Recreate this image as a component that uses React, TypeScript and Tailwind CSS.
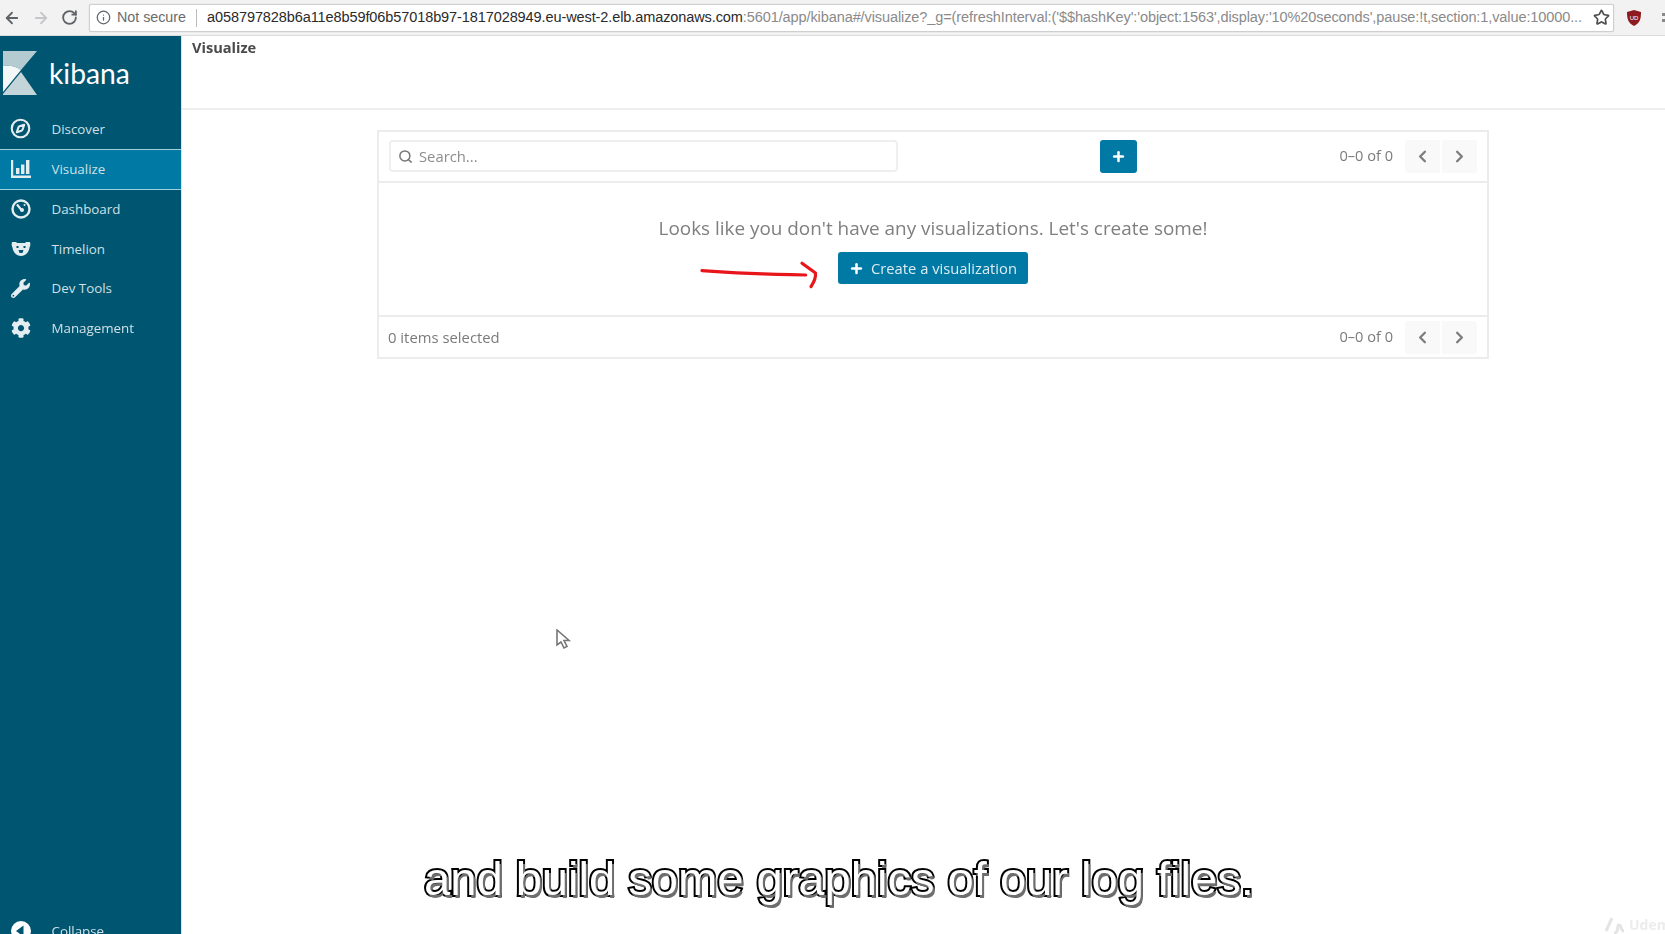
import { ArrowLeft, ArrowRight, RotateCw, Info, Star, Search, Plus, ChevronLeft, ChevronRight, Compass } from "lucide-react";
import { FaWrench, FaCog } from "react-icons/fa";

const Bear = () => (
  <svg width="20" height="15" viewBox="0 0 20 15" fill="currentColor">
    <path d="M1 1h4l1 1h8l1-1h4c.5 2 .5 4-.5 5.500C18 11 14.500 15 10 15S2 11 1.500 6.500C.5 5 .5 3 1 1z" />
    <path d="M5.500 5h2v2h-2zM12.500 5h2v2h-2zM7.500 9h5l-1 3h-3z" fill="#005571" />
  </svg>
);

const BarsIcon = () => (
  <svg width="20" height="18" viewBox="0 0 20 18" fill="currentColor">
    <path d="M0 0h2.200v15.500H20V18H0z" />
    <rect x="5" y="8" width="3.400" height="6" />
    <rect x="10" y="4.500" width="3.400" height="9.500" />
    <rect x="15" y="0" width="3.400" height="14" />
  </svg>
);

const Gauge = () => (
  <svg width="20" height="20" viewBox="0 0 20 20" fill="none" stroke="currentColor">
    <circle cx="10" cy="10" r="8.500" strokeWidth="2.400" />
    <path d="M6 5.500l4.500 5.500" strokeWidth="2.200" />
    <circle cx="11" cy="11" r="2" fill="currentColor" stroke="none" />
    <circle cx="13.500" cy="6" r="1" fill="currentColor" stroke="none" />
  </svg>
);

const CollapseIcon = () => (
  <svg width="20" height="20" viewBox="0 0 20 20">
    <circle cx="10" cy="10" r="10" fill="#ffffff" />
    <path d="M12.500 4.500v11L5 10z" fill="#005571" />
  </svg>
);

const Pager = () => (
  <div className="flex items-center">
    <span className="text-[14.600px] text-[#7b7b7b] mr-[12px]">0–0 of 0</span>
    <div className="flex gap-[2px]">
      <div className="w-[35px] h-[33px] bg-[#f9f9f9] flex items-center justify-center rounded-l-[3px]">
        <ChevronLeft size={19} strokeWidth={3} className="text-[#7d7d7d]" />
      </div>
      <div className="w-[35px] h-[33px] bg-[#f9f9f9] flex items-center justify-center rounded-r-[3px]">
        <ChevronRight size={19} strokeWidth={3} className="text-[#7d7d7d]" />
      </div>
    </div>
  </div>
);

const items = [
  { label: "Discover", icon: <Compass size={21} strokeWidth={2.4} /> },
  { label: "Visualize", icon: <BarsIcon />, active: true },
  { label: "Dashboard", icon: <Gauge /> },
  { label: "Timelion", icon: <Bear /> },
  { label: "Dev Tools", icon: <FaWrench size={19} /> },
  { label: "Management", icon: <FaCog size={20} /> },
];

export default function App() {
  return (
    <div className="relative w-[1665px] h-[934px] overflow-hidden bg-white font-['Open_Sans',sans-serif]">
      <div className="flex flex-col h-full blur-[0.5px]">
        <header className="h-[36px] shrink-0 bg-[#f2f2f2] flex items-center border-b border-[#dcdcdc] font-['Liberation_Sans',sans-serif]">
          <ArrowLeft size={18} strokeWidth={2.4} className="ml-[3px] text-[#5f6368]" />
          <ArrowRight size={18} strokeWidth={2.4} className="ml-[11px] text-[#c4c6c9]" />
          <RotateCw size={17} strokeWidth={2.6} className="ml-[11px] text-[#5f6368]" />
          <div className="ml-[11px] w-[1528px] h-[28px] bg-white border border-[#cfcfcf] rounded-[2px] flex items-center shadow-[0_0_1px_#bbb]">
            <Info size={15} className="ml-[6px] text-[#5f6368] shrink-0" />
            <span className="ml-[6px] text-[14.300px] text-[#6b6b6b] shrink-0">Not secure</span>
            <span className="ml-[10px] w-px h-[18px] bg-[#bdbdbd] shrink-0" />
            <span className="ml-[10px] text-[14.530px] whitespace-nowrap overflow-hidden flex-1 tracking-[-0.1px]">
              <span className="text-[#2a2a2a]">a058797828b6a11e8b59f06b57018b97-1817028949.eu-west-2.elb.amazonaws.com</span>
              <span className="text-[#8a8a8a]">:5601/app/kibana#/visualize?_g=(refreshInterval:('$$hashKey':'object:1563',display:'10%20seconds',pause:!t,section:1,value:10000...</span>
            </span>
            <Star size={17} strokeWidth={2.4} className="mx-[3px] text-[#4d4d4d] shrink-0" />
          </div>
          <svg width="18" height="18" viewBox="0 0 18 18" className="ml-[11px] shrink-0">
            <path d="M9 1l7 2c0 7-1 11-7 14C3 14 2 10 2 3z" fill="#8e1b1f" />
            <text x="9" y="11" fontSize="6" textAnchor="middle" fill="#fff" fontFamily="Liberation Sans">UD</text>
          </svg>
          <div className="ml-[19px] flex flex-col gap-[3px]">
            <span className="w-[3px] h-[3px] bg-[#888]" />
            <span className="w-[3px] h-[3px] bg-[#888]" />
          </div>
        </header>

        <div className="flex flex-1 min-h-0">
          <aside className="w-[182px] shrink-0 bg-[#005571] border-r border-[#cfe8f0] flex flex-col text-[13.350px] text-[#cfe0e6]">
            <div className="h-[73px] shrink-0 flex items-center pt-[2px]">
              <svg width="34" height="44" viewBox="0 0 34 44" className="ml-[3px] -mt-[2px] shrink-0">
                <path d="M0 0h34L18 19C13 15 7 14 0 15z" fill="#b4cbd1" />
                <path d="M0 15c7-1 13 0 18 4L0 41z" fill="#f4f8f9" />
                <path d="M18 21l16 23H0v-1z" fill="#c3d5d9" />
              </svg>
              <span className="ml-[12px] text-[28.300px] leading-none text-white font-['Lato',sans-serif]">kibana</span>
            </div>
            <nav className="flex flex-col">
              {items.map((it) => (
                <div
                  key={it.label}
                  className={
                    it.active
                      ? "h-[41px] flex items-center bg-[#0079a5] border-y border-[#9fd0e0]"
                      : "h-[39.500px] flex items-center"
                  }
                >
                  <span className="w-[41px] flex justify-center text-[#e4eef1]">{it.icon}</span>
                  <span className="ml-[10.500px]">{it.label}</span>
                </div>
              ))}
            </nav>
            <div className="mt-auto -mb-[17px] h-[40px] flex items-center">
              <span className="w-[41px] flex justify-center"><CollapseIcon /></span>
              <span className="ml-[10.500px]">Collapse</span>
            </div>
          </aside>

          <main className="flex-1 min-w-0 flex flex-col">
            <div className="h-[74px] shrink-0 border-b-2 border-[#efefef] pl-[10px] pt-[1px] text-[14.600px] font-bold text-[#4a4a4a]">Visualize</div>
            <section className="ml-[195px] mt-[20px] w-[1112px] h-[229px] border-2 border-[#ececec] flex flex-col">
              <div className="h-[51px] shrink-0 border-b-2 border-[#ececec] flex items-center pl-[10px] pr-[10px]">
                <div className="w-[509px] h-[32px] -mt-[1px] border-2 border-[#efefef] rounded-[4px] flex items-center text-[14.800px] text-[#8d8d8d]">
                  <Search size={15} strokeWidth={2.4} className="ml-[7px] mr-[6px] text-[#777]" />
                  Search...
                </div>
                <div className="ml-[202px] w-[37px] h-[33px] -mt-[1px] bg-[#0079a5] rounded-[3px] flex items-center justify-center">
                  <Plus size={15} strokeWidth={4} className="text-white" />
                </div>
                <div className="ml-auto -mt-[1px]"><Pager /></div>
              </div>
              <div className="flex-1 flex flex-col items-center justify-start">
                <p className="mt-[33px] text-[18.900px] leading-[24px] text-[#7f7f7f]">Looks like you don't have any visualizations. Let's create some!</p>
                <div className="mt-[12px] w-[190px] h-[32px] bg-[#0079a5] rounded-[3px] flex items-center justify-center text-[14.750px] text-[#dcecf2]">
                  <Plus size={15} strokeWidth={4} className="text-white mr-[7px]" />
                  Create a visualization
                </div>
              </div>
              <div className="h-[42px] shrink-0 border-t-2 border-[#ececec] flex items-center justify-between pl-[9px] pr-[10px]">
                <span className="text-[14.850px] text-[#7b7b7b]">0 items selected</span>
                <Pager />
              </div>
            </section>
          </main>
        </div>
      </div>

      <svg className="absolute left-[698px] top-[258px]" width="124" height="34" viewBox="0 0 124 34" fill="none">
        <path d="M4 12.700C40 15.500 75 16.500 107.700 17" stroke="#e8161b" strokeWidth="3.200" strokeLinecap="round" />
        <path d="M104 5.300L117.500 15C118 19 116 24 113 28.700" stroke="#e8161b" strokeWidth="3.200" strokeLinecap="round" strokeLinejoin="round" />
      </svg>

      <svg className="absolute left-[555px] top-[629px]" width="18" height="22" viewBox="0 0 18 22" fill="#fff">
        <path d="M2 1v15l4-3 3 6 3-1.500-3-6h5z" stroke="#777" strokeWidth="1.600" />
      </svg>

      <div className="absolute left-[424px] top-[849px] whitespace-nowrap font-['Liberation_Sans',sans-serif] text-[47.100px] leading-[60px] text-white [-webkit-text-stroke:4px_#000] [paint-order:stroke_fill] [text-shadow:2px_3px_0_#6e6e6e]">
        and build some graphics of our log files.
      </div>

      <div className="absolute left-[1604px] top-[914px] flex items-center gap-[3px] text-[14px] font-bold text-[#ececec] blur-[0.6px] font-['Open_Sans',sans-serif]">
        <svg width="22" height="20" viewBox="0 0 22 20" fill="none" stroke="#e4e4e4" strokeWidth="3">
          <path d="M2 16L8 3M10 18c6 0 2-8 5-8s1 6 5 6" />
        </svg>
        Udemy
      </div>
    </div>
  );
}
